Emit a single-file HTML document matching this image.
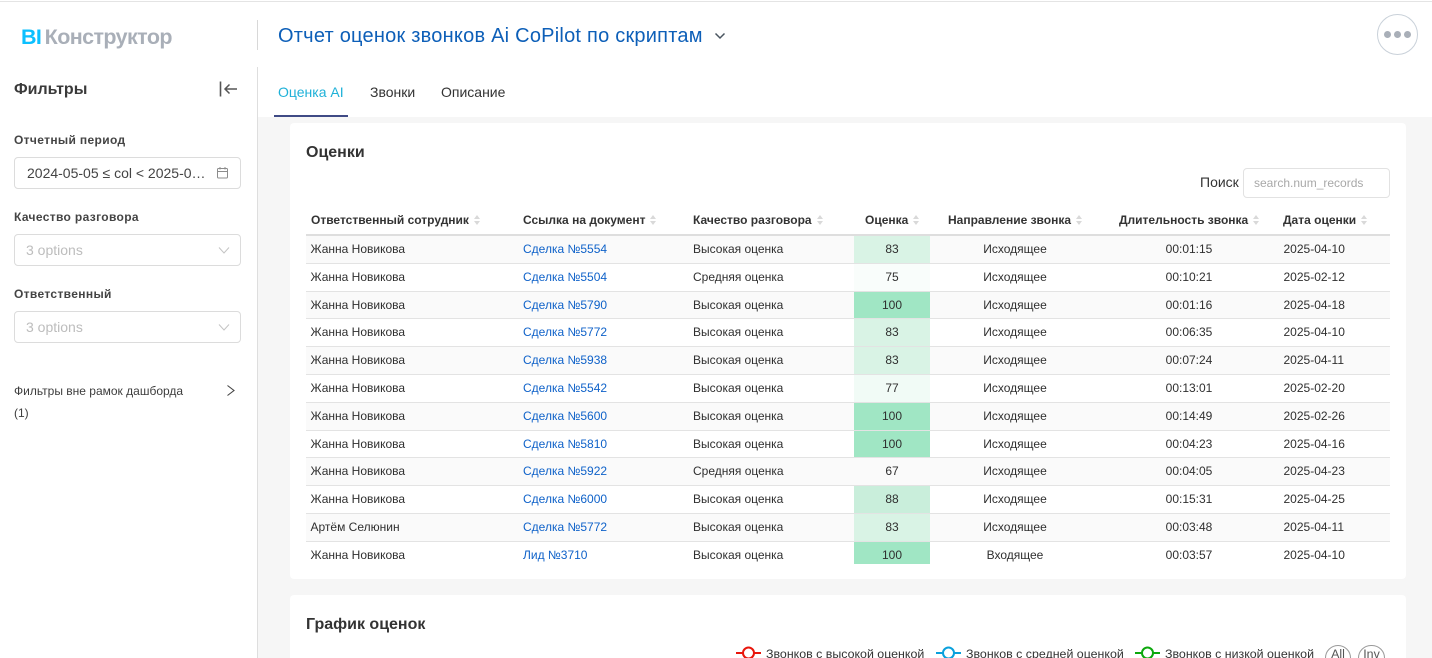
<!DOCTYPE html>
<html lang="ru">
<head>
<meta charset="utf-8">
<title>Отчет оценок звонков</title>
<style>
html,body{margin:0;padding:0;width:1432px;height:658px;overflow:hidden;background:#fff;font-family:"Liberation Sans","Noto Sans CJK SC",sans-serif;color:#333}
*{box-sizing:border-box}
#p{position:relative;width:1432px;height:658px;overflow:hidden;background:#fff}
.a{position:absolute;white-space:nowrap}
.r{position:absolute;left:306px;width:1084px;height:28px;border-bottom:1px solid #e3e3e3;font-size:12px;color:#2f2f2f;line-height:27px}
.r.z{background:#fafafa}
.r.l{border-bottom:0}
.r span{position:absolute;top:0;white-space:nowrap}
.c1{left:4.500px}.c2{left:217px;color:#0f62c9}.c3{left:387px}
.c4{left:548px;width:76px;height:100%;text-align:center}
.c5{left:649px;width:120px;text-align:center}
.c6{left:843px;width:80px;text-align:center}
.c7{left:977.500px}
.h{position:absolute;top:212px;font-size:12px;font-weight:700;color:#333;line-height:16px;white-space:nowrap}
.h i{display:inline-block;width:7px;height:11px;margin-left:5px;vertical-align:-2px;position:relative}
.h i:before{content:"";position:absolute;left:0;top:0;border:3.500px solid transparent;border-top:0;border-bottom:4px solid #d9d9d9}
.h i:after{content:"";position:absolute;left:0;top:6px;border:3.500px solid transparent;border-bottom:0;border-top:4px solid #d9d9d9}
.lab{position:absolute;left:14px;font-size:12px;font-weight:700;color:#444;letter-spacing:.35px;white-space:nowrap;line-height:16px}
.box{position:absolute;left:14px;width:227px;height:32px;border:1px solid #dcdcdc;border-radius:4px;background:#fff}
.lg{position:absolute;top:646px;font-size:12.400px;line-height:16px;color:#333;white-space:nowrap}
</style>
</head>
<body>
<div id="p">
<div class="a" style="left:0;top:1px;width:1432px;height:1px;background:#e4e4e4"></div>

<div class="a" style="left:21px;top:25px;font-size:21.500px;font-weight:700;line-height:24px;letter-spacing:-.6px;word-spacing:-2px;color:#a9afb8"><span style="color:#0cc0ff">BI</span> Конструктор</div>
<div class="a" style="left:257px;top:20px;width:1px;height:30px;background:#d8d8d8"></div>
<div class="a" style="left:278px;top:24px;font-size:20px;line-height:24px;color:#0d5fb8;letter-spacing:.23px">Отчет оценок звонков Ai CoPilot по скриптам</div>
<svg class="a" style="left:713px;top:31px" width="14" height="10" viewBox="0 0 14 10"><path d="M2.500 2.500 7 7l4.500-4.500" fill="none" stroke="#4a5560" stroke-width="1.500"/></svg>
<div class="a" style="left:1377px;top:14px;width:41px;height:41px;border:1px solid #c9d1d9;border-radius:50%"></div>
<div class="a" style="left:1384px;top:31px;width:7px;height:7px;border-radius:50%;background:#a9afb8"></div>
<div class="a" style="left:1394px;top:31px;width:7px;height:7px;border-radius:50%;background:#a9afb8"></div>
<div class="a" style="left:1404px;top:31px;width:7px;height:7px;border-radius:50%;background:#a9afb8"></div>

<!-- sidebar -->
<div class="a" style="left:257px;top:67px;width:1px;height:591px;background:#dedede"></div>
<div class="a" style="left:14px;top:80px;font-size:16px;font-weight:700;line-height:19px;color:#3a3a3a">Фильтры</div>
<svg class="a" style="left:218px;top:80px" width="20" height="18" viewBox="0 0 20 18"><path d="M2.500 1.500v15" stroke="#555" stroke-width="1.600" fill="none"/><path d="M19 9H7M11.500 4.500 7 9l4.500 4.500" stroke="#555" stroke-width="1.500" fill="none"/></svg>

<div class="lab" style="top:132px">Отчетный период</div>
<div class="box" style="top:157px"></div>
<div class="a" style="left:27px;top:165px;font-size:14px;line-height:16px;color:#444">2024-05-05 ≤ col &lt; 2025-0…</div>
<svg class="a" style="left:216px;top:166px" width="13" height="14" viewBox="0 0 13 14"><rect x="1.500" y="2.500" width="10" height="9.500" rx="1" fill="none" stroke="#8c8c8c"/><path d="M1.500 5.500h10M4 1v2.500M9 1v2.500" stroke="#8c8c8c" fill="none"/></svg>

<div class="lab" style="top:209px">Качество разговора</div>
<div class="box" style="top:234px"></div>
<div class="a" style="left:26px;top:242px;font-size:14px;line-height:16px;color:#bdbdbd">3 options</div>
<svg class="a" style="left:218px;top:246px" width="12" height="9" viewBox="0 0 12 9"><path d="M1 1.500 6 7l5-5.500" fill="none" stroke="#c4c4c4"/></svg>

<div class="lab" style="top:286px">Ответственный</div>
<div class="box" style="top:311px"></div>
<div class="a" style="left:26px;top:319px;font-size:14px;line-height:16px;color:#bdbdbd">3 options</div>
<svg class="a" style="left:218px;top:323px" width="12" height="9" viewBox="0 0 12 9"><path d="M1 1.500 6 7l5-5.500" fill="none" stroke="#c4c4c4"/></svg>

<div class="a" style="left:14px;top:383px;font-size:12px;line-height:16px;color:#3d3d3d">Фильтры вне рамок дашборда</div>
<svg class="a" style="left:226px;top:384px" width="10" height="13" viewBox="0 0 10 13"><path d="M1.500 1.500 8 6.500l-6.500 5" fill="none" stroke="#444" stroke-width="1.100"/></svg>
<div class="a" style="left:14px;top:405px;font-size:12px;line-height:16px;color:#3d3d3d">(1)</div>

<!-- main -->
<div class="a" style="left:258px;top:117px;width:1174px;height:541px;background:#f6f6f6"></div>
<div class="a" style="left:278px;top:84px;font-size:14px;line-height:16px;color:#1eb1d8">Оценка AI</div>
<div class="a" style="left:370px;top:84px;font-size:14px;line-height:16px;color:#333">Звонки</div>
<div class="a" style="left:441px;top:84px;font-size:14px;line-height:16px;color:#333">Описание</div>
<div class="a" style="left:274px;top:115px;width:74px;height:2px;background:#3f4a85"></div>

<div class="a" style="left:290px;top:123px;width:1116px;height:456px;background:#fff;border-radius:4px"></div>
<div class="a" style="left:306px;top:143px;font-size:16px;font-weight:700;line-height:19px;color:#333">Оценки</div>
<div class="a" style="left:1200px;top:174px;font-size:14px;line-height:16px;color:#333">Поиск</div>
<div class="a" style="left:1243px;top:168px;width:147px;height:30px;border:1px solid #e2e2e2;border-radius:4px"></div>
<div class="a" style="left:1254px;top:175px;font-size:12px;line-height:16px;color:#a8a8a8">search.num_records</div>

<div class="h" style="left:311px">Ответственный сотрудник<i></i></div>
<div class="h" style="left:523px">Ссылка на документ<i></i></div>
<div class="h" style="left:693px">Качество разговора<i></i></div>
<div class="h" style="left:865px">Оценка<i></i></div>
<div class="h" style="left:948px">Направление звонка<i></i></div>
<div class="h" style="left:1119px">Длительность звонка<i></i></div>
<div class="h" style="left:1283px">Дата оценки<i></i></div>
<div class="a" style="left:306px;top:234px;width:1084px;height:2px;background:#dedede"></div>

<div class="r z" style="top:236px"><span class="c1">Жанна Новикова</span><span class="c2">Сделка №5554</span><span class="c3">Высокая оценка</span><span class="c4" style="background:#d9f3e5">83</span><span class="c5">Исходящее</span><span class="c6">00:01:15</span><span class="c7">2025-04-10</span></div>
<div class="r" style="top:264px"><span class="c1">Жанна Новикова</span><span class="c2">Сделка №5504</span><span class="c3">Средняя оценка</span><span class="c4" style="background:#f9fdfb">75</span><span class="c5">Исходящее</span><span class="c6">00:10:21</span><span class="c7">2025-02-12</span></div>
<div class="r z" style="top:292px;height:27px"><span class="c1">Жанна Новикова</span><span class="c2">Сделка №5790</span><span class="c3">Высокая оценка</span><span class="c4" style="background:#a0e6c4">100</span><span class="c5">Исходящее</span><span class="c6">00:01:16</span><span class="c7">2025-04-18</span></div>
<div class="r" style="top:319px"><span class="c1">Жанна Новикова</span><span class="c2">Сделка №5772</span><span class="c3">Высокая оценка</span><span class="c4" style="background:#d9f3e5">83</span><span class="c5">Исходящее</span><span class="c6">00:06:35</span><span class="c7">2025-04-10</span></div>
<div class="r z" style="top:347px"><span class="c1">Жанна Новикова</span><span class="c2">Сделка №5938</span><span class="c3">Высокая оценка</span><span class="c4" style="background:#d9f3e5">83</span><span class="c5">Исходящее</span><span class="c6">00:07:24</span><span class="c7">2025-04-11</span></div>
<div class="r" style="top:375px"><span class="c1">Жанна Новикова</span><span class="c2">Сделка №5542</span><span class="c3">Высокая оценка</span><span class="c4" style="background:#f1fbf6">77</span><span class="c5">Исходящее</span><span class="c6">00:13:01</span><span class="c7">2025-02-20</span></div>
<div class="r z" style="top:403px"><span class="c1">Жанна Новикова</span><span class="c2">Сделка №5600</span><span class="c3">Высокая оценка</span><span class="c4" style="background:#a0e6c4">100</span><span class="c5">Исходящее</span><span class="c6">00:14:49</span><span class="c7">2025-02-26</span></div>
<div class="r" style="top:431px;height:27px"><span class="c1">Жанна Новикова</span><span class="c2">Сделка №5810</span><span class="c3">Высокая оценка</span><span class="c4" style="background:#a0e6c4">100</span><span class="c5">Исходящее</span><span class="c6">00:04:23</span><span class="c7">2025-04-16</span></div>
<div class="r z" style="top:458px"><span class="c1">Жанна Новикова</span><span class="c2">Сделка №5922</span><span class="c3">Средняя оценка</span><span class="c4">67</span><span class="c5">Исходящее</span><span class="c6">00:04:05</span><span class="c7">2025-04-23</span></div>
<div class="r" style="top:486px"><span class="c1">Жанна Новикова</span><span class="c2">Сделка №6000</span><span class="c3">Высокая оценка</span><span class="c4" style="background:#c9eedb">88</span><span class="c5">Исходящее</span><span class="c6">00:15:31</span><span class="c7">2025-04-25</span></div>
<div class="r z" style="top:514px"><span class="c1">Артём Селюнин</span><span class="c2">Сделка №5772</span><span class="c3">Высокая оценка</span><span class="c4" style="background:#d9f3e5">83</span><span class="c5">Исходящее</span><span class="c6">00:03:48</span><span class="c7">2025-04-11</span></div>
<div class="r l" style="top:542px;height:22px"><span class="c1">Жанна Новикова</span><span class="c2">Лид №3710</span><span class="c3">Высокая оценка</span><span class="c4" style="background:#a0e6c4">100</span><span class="c5">Входящее</span><span class="c6">00:03:57</span><span class="c7">2025-04-10</span></div>

<div class="a" style="left:290px;top:595px;width:1116px;height:63px;background:#fff;border-radius:4px 4px 0 0"></div>
<div class="a" style="left:306px;top:615px;font-size:16px;font-weight:700;line-height:19px;color:#333">График оценок</div>

<svg class="a" style="left:736px;top:646px" width="26" height="12" viewBox="0 0 26 12"><path d="M0 7h7M18 7h7" stroke="#e8160c" stroke-width="2"/><circle cx="12.500" cy="7" r="5.500" fill="#fff" stroke="#e8160c" stroke-width="2"/></svg>
<div class="lg" style="left:766px">Звонков с высокой оценкой</div>
<svg class="a" style="left:936px;top:646px" width="26" height="12" viewBox="0 0 26 12"><path d="M0 7h7M18 7h7" stroke="#0aa0dc" stroke-width="2"/><circle cx="12.500" cy="7" r="5.500" fill="#fff" stroke="#0aa0dc" stroke-width="2"/></svg>
<div class="lg" style="left:966px">Звонков с средней оценкой</div>
<svg class="a" style="left:1135px;top:646px" width="26" height="12" viewBox="0 0 26 12"><path d="M0 7h7M18 7h7" stroke="#0da80d" stroke-width="2"/><circle cx="12.500" cy="7" r="5.500" fill="#fff" stroke="#0da80d" stroke-width="2"/></svg>
<div class="lg" style="left:1165px">Звонков с низкой оценкой</div>
<div class="a" style="left:1325px;top:645px;width:26px;height:26px;border:1px solid #999;border-radius:13px;text-align:center;font-size:12.400px;line-height:17px;color:#555">All</div>
<div class="a" style="left:1358px;top:645px;width:27px;height:26px;border:1px solid #999;border-radius:13px;text-align:center;font-size:12.400px;line-height:17px;color:#555">Inv</div>
</div>
</body>
</html>
